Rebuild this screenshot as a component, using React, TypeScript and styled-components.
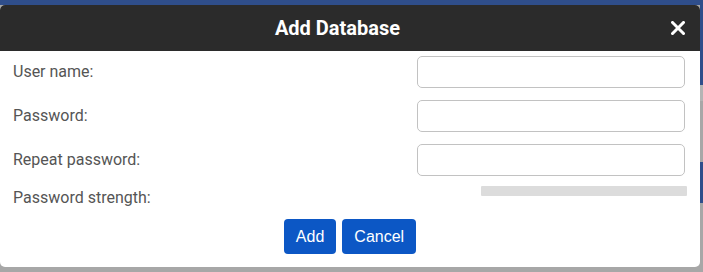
import styled, { createGlobalStyle } from "styled-components";

const GlobalStyle = createGlobalStyle`
  html, body {
    margin: 0;
    padding: 0;
  }
  body {
    font-family: Roboto, "Liberation Sans", sans-serif;
  }
`;

const Backdrop = styled.div`
  position: relative;
  width: 703px;
  height: 272px;
  overflow: hidden;
  background:
    linear-gradient(#2f4e8b, #2f4e8b) 0 0 / 100% 5px no-repeat,
    linear-gradient(
        to bottom,
        #2f4e8b 0 85px,
        #b4b4b4 85px 101px,
        #a7a7a7 101px 162px,
        #2f4e8b 162px 203px,
        #a7a7a7 203px
      )
      right top / 3px 100% no-repeat,
    #a7a7a7;
`;

const Modal = styled.div`
  position: absolute;
  left: 0;
  top: 5px;
  width: 700px;
  height: 262px;
  background: #fff;
  border-radius: 5px;
  overflow: hidden;
  display: flex;
  flex-direction: column;
`;

const Header = styled.div`
  height: 46px;
  flex: none;
  background: #2b2b2b;
  display: flex;
  align-items: center;
  position: relative;
`;

const Title = styled.h2`
  flex: 1;
  margin: 0;
  padding-right: 25px;
  text-align: center;
  font-family: Roboto, sans-serif;
  font-weight: 700;
  font-size: 20px;
  color: #fff;
`;

const CloseButton = styled.button`
  position: absolute;
  right: 14px;
  top: 15px;
  width: 16px;
  height: 16px;
  padding: 0;
  border: 0;
  background: none;
  cursor: pointer;
  display: flex;
  align-items: center;
  justify-content: center;
`;

const Body = styled.div`
  flex: 1;
  padding: 5px 13px 13px 13px;
  display: flex;
  flex-direction: column;
`;

const Fields = styled.div`
  display: flex;
  flex-direction: column;
  gap: 12px;
`;

const Row = styled.div<{ $top?: boolean }>`
  display: flex;
  justify-content: space-between;
  align-items: ${(p) => (p.$top ? "flex-start" : "center")};
  ${(p) => (p.$top ? "margin-top: -2px;" : "")}
`;

const Label = styled.label`
  font-family: Roboto, sans-serif;
  font-size: 16px;
  line-height: 24px;
  color: #555;
`;

const Right = styled.div`
  width: 270px;
  display: flex;
  justify-content: flex-end;
`;

const Input = styled.input`
  box-sizing: border-box;
  width: 268px;
  height: 32px;
  margin-right: 2px;
  border: 1px solid #c2c2c2;
  border-radius: 5px;
  background: #fff;
  padding: 0 8px;
  font-size: 15px;
  outline: none;
`;

const StrengthBar = styled.div`
  width: 206px;
  height: 10px;
  background: #dcdcdc;
  border-radius: 1px;
`;

const Actions = styled.div`
  margin-top: 9px;
  display: flex;
  justify-content: center;
  gap: 6px;
`;

const Button = styled.button`
  height: 35px;
  padding: 0 12px;
  border: 0;
  border-radius: 4px;
  background: #0c57c5;
  color: #fff;
  font-family: "Liberation Sans", Arial, sans-serif;
  font-size: 16px;
  cursor: pointer;
`;

export default function App() {
  return (
    <Backdrop>
      <GlobalStyle />
      <Modal>
        <Header>
          <Title>Add Database</Title>
          <CloseButton aria-label="Close">
            <svg width="14" height="14" viewBox="0 0 14 14">
              <path d="M1.5 1.5 L12.5 12.5 M12.5 1.5 L1.5 12.5" stroke="#fff" strokeWidth="3" strokeLinecap="square" />
            </svg>
          </CloseButton>
        </Header>
        <Body>
          <Fields>
            <Row>
              <Label>User name:</Label>
              <Right><Input type="text" /></Right>
            </Row>
            <Row>
              <Label>Password:</Label>
              <Right><Input type="password" /></Right>
            </Row>
            <Row>
              <Label>Repeat password:</Label>
              <Right><Input type="password" /></Right>
            </Row>
            <Row $top>
              <Label>Password strength:</Label>
              <Right><StrengthBar /></Right>
            </Row>
          </Fields>
          <Actions>
            <Button>Add</Button>
            <Button>Cancel</Button>
          </Actions>
        </Body>
      </Modal>
    </Backdrop>
  );
}
